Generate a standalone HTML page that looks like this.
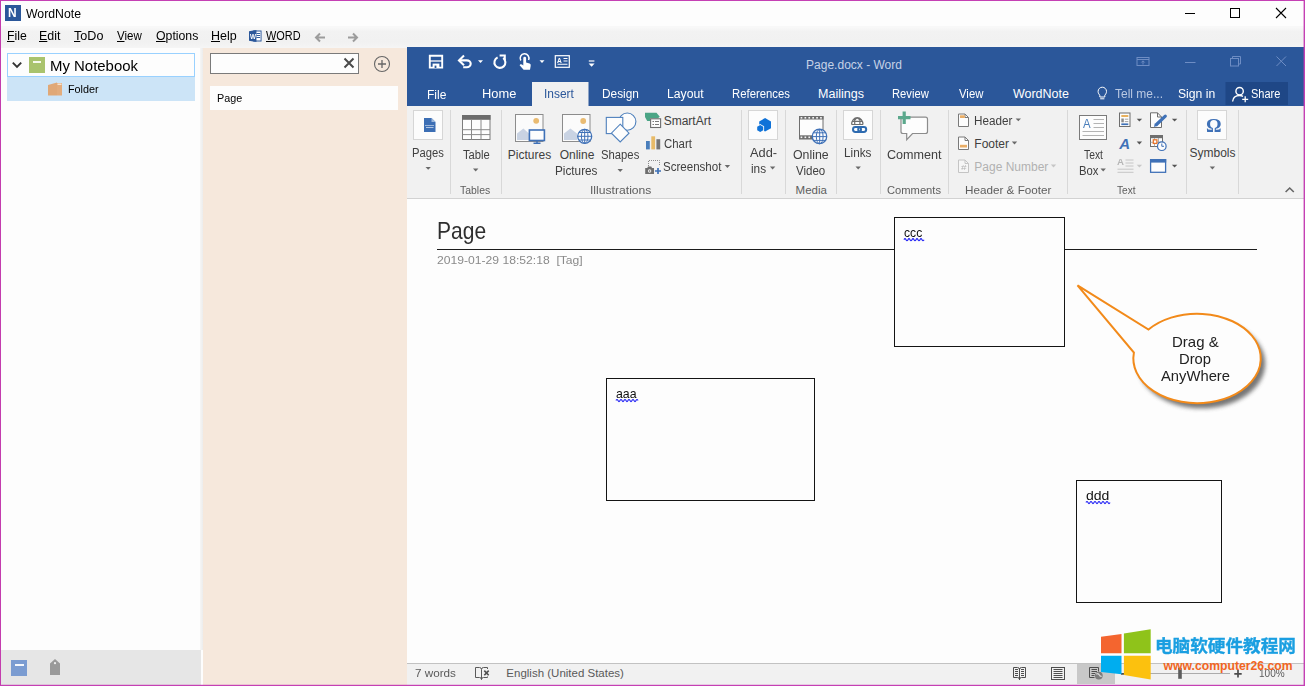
<!DOCTYPE html>
<html>
<head>
<meta charset="utf-8">
<title>WordNote</title>
<style>
html,body{margin:0;padding:0;}
body{width:1305px;height:686px;position:relative;overflow:hidden;background:#fdfdfd;font-family:"Liberation Sans",sans-serif;font-size:12px;color:#000;}
.abs{position:absolute;}
svg{position:absolute;overflow:visible;}
.t{position:absolute;white-space:nowrap;line-height:1;transform-origin:0 50%;}
u{text-decoration:underline;text-underline-offset:1px;}
#titlebar{left:1px;top:1px;width:1303px;height:26px;background:#fdfdfd;border-bottom:1px solid #f8f8f8;box-sizing:border-box;}
#menubar{left:1px;top:27px;width:1303px;height:21px;background:linear-gradient(180deg,#f9f9f9 0,#f2f2f2 22%,#f1f1f1 70%,#f5f5f5 100%);}
#leftpane{left:1px;top:48px;width:202px;height:603px;background:#fdfdfd;}
#leftbar{left:1px;top:650px;width:200px;height:35px;background:#e6e6e6;}
#midpane{left:203px;top:48px;width:204px;height:637px;background:#f6e8dc;}
#wtitle{left:407px;top:47px;width:897px;height:59px;background:#2b579a;}
#ribbon{left:407px;top:106px;width:897px;height:92px;background:#f1f1f1;border-bottom:1px solid #d2d2d2;}
#doc{left:407px;top:199px;width:897px;height:464px;background:#fdfdfd;}
#status{left:407px;top:663px;width:897px;height:22px;background:#f1f1f1;border-top:1px solid #c2c2c2;box-sizing:border-box;}
.sep{position:absolute;top:110px;width:1px;height:84px;background:#d8d8d8;}
.bx{position:absolute;background:#fcfcfc;border:1px solid #d6d6d6;box-sizing:border-box;}

</style>
</head>
<body>
<div class="abs" id="titlebar"></div>
<div class="abs" id="menubar"></div>
<div class="abs" id="leftpane"></div>
<div class="abs" id="leftbar"></div>
<div class="abs" style="left:200px;top:48px;width:3px;height:602px;background:linear-gradient(90deg,#f6f6f6,#ececec);"></div>
<div class="abs" id="midpane"></div>
<div class="abs" id="wtitle"></div>
<div class="abs" id="ribbon"></div>
<div class="abs" id="doc"></div>
<div class="abs" id="status"></div>
<div class="abs" style="left:5px;top:5px;width:16px;height:16px;background:#2b579a;"></div>
<div class="t" style="left:8.20px;top:7.00px;font-size:12.5px;color:#fff;font-weight:bold;transform:scaleX(0.9522);">N</div><div class="t" style="left:26.00px;top:8.00px;font-size:12px;color:#000;transform:scaleX(1.0221);">WordNote</div>
<svg style="left:1180px;top:4px" width="112" height="20" viewBox="0 0 112 20">
<path d="M5 9.5H15" stroke="#000" stroke-width="1" fill="none"/>
<rect x="50.5" y="4.5" width="9" height="9" stroke="#000" stroke-width="1" fill="none"/>
<path d="M96 4L106 14M106 4L96 14" stroke="#000" stroke-width="1.1" fill="none"/>
</svg>
<div class="t" style="left:7.10px;top:30.00px;font-size:12px;color:#000;transform:scaleX(1.0189);"><u>F</u>ile</div><div class="t" style="left:39.10px;top:30.00px;font-size:12px;color:#000;transform:scaleX(1.0373);"><u>E</u>dit</div><div class="t" style="left:73.99px;top:30.00px;font-size:12px;color:#000;transform:scaleX(1.0490);"><u>T</u>oDo</div><div class="t" style="left:117.20px;top:30.00px;font-size:12px;color:#000;transform:scaleX(0.9608);"><u>V</u>iew</div><div class="t" style="left:155.59px;top:30.00px;font-size:12px;color:#000;transform:scaleX(1.0238);"><u>O</u>ptions</div><div class="t" style="left:211.29px;top:30.00px;font-size:12px;color:#000;transform:scaleX(1.0389);"><u>H</u>elp</div><svg style="left:248.800px;top:30px" width="13" height="12" viewBox="0 0 14 12" preserveAspectRatio="none">
<rect x="5" y="1" width="8" height="10" fill="#fff" stroke="#2b579a" stroke-width="1"/>
<path d="M8 3.5H12M8 5.5H12M8 7.5H12" stroke="#2b579a" stroke-width="1"/>
<path d="M0 1.2L8 0V12L0 10.8Z" fill="#2b579a"/>
</svg>
<div class="t" style="left:249.60px;top:33.00px;font-size:7.5px;color:#fff;font-weight:bold;transform:scaleX(0.8458);">W</div><div class="t" style="left:266.10px;top:30.00px;font-size:12px;color:#000;transform:scaleX(0.9105);"><u>W</u>ORD</div>
<svg style="left:314px;top:32px" width="46" height="12" viewBox="0 0 46 12">
<path d="M11 5.5H2.5M6 1.5L2 5.5L6 9.5" stroke="#9c9c9c" stroke-width="2" fill="none"/>
<path d="M34 5.5H42.5M39 1.5L43 5.5L39 9.5" stroke="#9c9c9c" stroke-width="2" fill="none"/>
</svg>
<div class="abs" style="left:7px;top:53px;width:186px;height:22px;border:1px solid #99d1ff;background:#fdfdfd;"></div>
<div class="abs" style="left:7px;top:77px;width:188px;height:24px;background:#cce4f7;"></div>
<svg style="left:11px;top:59px" width="12" height="10" viewBox="0 0 12 10"><path d="M1.800 3.600L6 7.800L10.200 3.600" stroke="#333" stroke-width="1.900" fill="none"/></svg>
<div class="abs" style="left:29px;top:57px;width:16px;height:16px;background:#a9c36d;"></div>
<div class="abs" style="left:33px;top:61px;width:8px;height:2px;background:#f6f9ec;"></div>
<div class="t" style="left:50.05px;top:58.00px;font-size:15.4px;color:#000;transform:scaleX(0.9702);">My Notebook</div>
<svg style="left:48px;top:82px" width="15" height="14" viewBox="0 0 15 14"><path d="M0 3L9 0.5V13.5H0Z" fill="#e0a877"/><path d="M9 1H14V13.500H9Z" fill="#e3ac7c"/><rect x="9.5" y="1.5" width="4" height="1.5" fill="#f7e3d0"/></svg>
<div class="t" style="left:67.53px;top:84.00px;font-size:11.5px;color:#000;transform:scaleX(0.9399);">Folder</div>
<div class="abs" style="left:11px;top:660px;width:16px;height:16px;background:#7b9cd1;"></div>
<div class="abs" style="left:15px;top:664px;width:9px;height:2px;background:#f4f7fc;"></div>
<svg style="left:49px;top:658px" width="12" height="18" viewBox="0 0 12 18"><path d="M1 5.400L6 1L11 5.400V17H1Z" fill="#9a9a9a"/><circle cx="6" cy="5.200" r="1.100" fill="#f0f0f0"/></svg>
<div class="abs" style="left:210px;top:53px;width:147px;height:19px;border:1px solid #7a7a7a;background:#fdfdfd;"></div>
<svg style="left:343px;top:57px" width="12" height="12" viewBox="0 0 12 12"><path d="M1.5 1.5L10.5 10.5M10.5 1.5L1.5 10.5" stroke="#4a4a4a" stroke-width="2" fill="none"/></svg>
<svg style="left:372px;top:54px" width="20" height="20" viewBox="0 0 20 20"><circle cx="10" cy="10" r="7.5" stroke="#666" stroke-width="1.1" fill="none"/><path d="M6 10H14M10 6V14" stroke="#666" stroke-width="1.3"/></svg>
<div class="abs" style="left:210px;top:86px;width:188px;height:24px;background:#fdfdfd;"></div>
<div class="t" style="left:216.53px;top:93.00px;font-size:11.8px;color:#000;transform:scaleX(0.9155);">Page</div><svg style="left:407px;top:47px" width="897" height="59" viewBox="407 47 897 59">
<!-- save -->
<path d="M429.800 55.800H442.200V67.600H429.800Z" fill="none" stroke="#fff" stroke-width="1.900"/>
<path d="M429.7 61H442.3" stroke="#fff" stroke-width="1.3"/>
<rect x="432.6" y="63.6" width="6.8" height="4.4" fill="#fff"/>
<rect x="434.6" y="65.6" width="1.8" height="2.4" fill="#2b579a"/>
<!-- undo -->
<path d="M464 55.6L459 60.4L464 65.200" fill="none" stroke="#fff" stroke-width="2.1"/>
<path d="M459.500 60.4H466.8A3.900 3.4 0 0 1 466.8 67.2H463.2" fill="none" stroke="#fff" stroke-width="2.1"/>
<path d="M478 60.2h5l-2.5 2.8z" fill="#fff"/>
<!-- redo/repeat -->
<path d="M497.6 57.4A5.500 5.5 0 1 0 503.2 58" fill="none" stroke="#fff" stroke-width="2.1"/>
<path d="M499.600 55.4H504.8V60.6" fill="none" stroke="#fff" stroke-width="2"/>
<!-- touch -->
<path d="M520.8 60.5A4.4 4.4 0 1 1 528.6 60" fill="none" stroke="#fff" stroke-width="1.5"/>
<path d="M523.3 58.2a1.4 1.4 0 0 1 2.8 0V62.5L529.6 63.6Q531 64.2 530.7 65.8L530 69.8H523.6L519.6 65.2Q520.3 63.6 522 64.6L523.3 65.6Z" fill="#fff"/>
<path d="M539.5 60.2h5l-2.5 2.8z" fill="#fff"/>
<!-- AE form -->
<rect x="555.3" y="55.7" width="14" height="11.6" fill="none" stroke="#fff" stroke-width="1.2"/>
<path d="M563.5 58.5H567.5M563.5 61H567.5M557.5 64.2H567.5" stroke="#fff" stroke-width="1.1"/>
<!-- customize -->
<path d="M588.8 61H594.4" stroke="#fff" stroke-width="1.2"/><path d="M588.6 63.6h6l-3 3.2z" fill="#fff"/>
<!-- win controls -->
<g stroke="#6e8dc4" fill="none" stroke-width="1" transform="translate(0,-1)">
<rect x="1137" y="58.5" width="12" height="8"/><path d="M1137 60.5H1149M1143 65.5V62M1141.3 63.5L1143 61.8L1144.7 63.5"/>
<path d="M1185 63.5H1195.5"/>
<rect x="1230.5" y="59.5" width="8" height="7.5"/><path d="M1232.5 59.5V57.5H1240.5V65H1238.5"/>
<path d="M1276.5 57.5L1286 67M1286 57.5L1276.5 67"/>
</g>
<!-- insert tab -->
<rect x="532" y="82" width="56.5" height="24" fill="#f1f1f1"/>
<!-- share btn -->
<rect x="1225.5" y="82" width="62.5" height="23" fill="#1f4786"/>
<!-- bulb -->
<path d="M1099.8 95.2C1098.4 93.6 1098.1 92.6 1098.1 91.4A4.2 4.2 0 0 1 1106.5 91.4C1106.500 92.6 1106.2 93.6 1104.8 95.2V97H1099.8Z" fill="none" stroke="#fff" stroke-width="1"/>
<path d="M1100.2 98.8H1104.4" stroke="#fff" stroke-width="1"/>
<!-- person -->
<circle cx="1239.600" cy="91.200" r="3.7" fill="none" stroke="#fff" stroke-width="1.4"/>
<path d="M1232.6 101.5C1233 97.2 1236 95.5 1239.6 95.5C1241 95.5 1242 95.8 1243 96.300" fill="none" stroke="#fff" stroke-width="1.4"/>
<path d="M1242.2 99.3H1248.2M1245.2 96.3V102.3" stroke="#fff" stroke-width="1.3"/>
</svg>
<div class="t" style="left:557.20px;top:58.00px;font-size:6.5px;color:#fff;font-weight:bold;transform:scaleX(1.0206);">A</div><div class="t" style="left:806.10px;top:59.00px;font-size:12px;color:#c6d2e6;">Page.docx - Word</div><div class="t" style="left:426.86px;top:89.00px;font-size:12.5px;color:#fff;transform:scaleX(0.9637);">File</div><div class="t" style="left:482.34px;top:88.00px;font-size:12.5px;color:#fff;transform:scaleX(1.0282);">Home</div><div class="t" style="left:544.04px;top:88.00px;font-size:12.5px;color:#2b579a;transform:scaleX(0.9563);">Insert</div><div class="t" style="left:602.15px;top:88.00px;font-size:12.5px;color:#fff;transform:scaleX(0.9482);">Design</div><div class="t" style="left:667.15px;top:88.00px;font-size:12.5px;color:#fff;transform:scaleX(0.9746);">Layout</div><div class="t" style="left:732.15px;top:88.00px;font-size:12.5px;color:#fff;transform:scaleX(0.9061);">References</div><div class="t" style="left:818.04px;top:88.00px;font-size:12.5px;color:#fff;">Mailings</div><div class="t" style="left:892.10px;top:88.00px;font-size:12.5px;color:#fff;transform:scaleX(0.8976);">Review</div><div class="t" style="left:959.20px;top:88.00px;font-size:12.5px;color:#fff;transform:scaleX(0.9079);">View</div><div class="t" style="left:1012.90px;top:88.00px;font-size:12.5px;color:#fff;">WordNote</div><div class="t" style="left:1115.24px;top:88.00px;font-size:12.5px;color:#b9c8e2;transform:scaleX(0.9592);">Tell me...</div><div class="t" style="left:1178.10px;top:88.00px;font-size:12.5px;color:#fff;transform:scaleX(0.9739);">Sign in</div><div class="t" style="left:1251.10px;top:88.00px;font-size:12.5px;color:#fff;transform:scaleX(0.8802);">Share</div><div class="sep" style="left:450px"></div><div class="sep" style="left:501px"></div><div class="sep" style="left:741px"></div><div class="sep" style="left:785px"></div><div class="sep" style="left:836px"></div><div class="sep" style="left:880px"></div><div class="sep" style="left:948px"></div><div class="sep" style="left:1067px"></div><div class="sep" style="left:1186px"></div><div class="sep" style="left:1238px"></div><div class="bx" style="left:413px;top:110px;width:30px;height:30px"></div><div class="bx" style="left:748px;top:110px;width:30px;height:30px"></div><div class="bx" style="left:843px;top:110px;width:30px;height:30px"></div><div class="bx" style="left:1197px;top:110px;width:30px;height:30px"></div><svg style="left:407px;top:106px" width="897" height="93" viewBox="407 106 897 93">
<!-- pages icon -->
<path d="M424 118H431.5L435.500 122V132H424Z" fill="#3c6eb4"/><path d="M431.5 118V122H435.5Z" fill="#9db8dc"/>
<path d="M425.500 125.5H434" stroke="#fff" stroke-width="1" stroke-dasharray="1 1"/><path d="M426 127.500H433.500" stroke="#cfdcee" stroke-width="0.8"/>
<path d="M425.5 166.9h5.4l-2.7 2.800z" fill="#6a6a6a"/>
<!-- table icon -->
<rect x="462.5" y="115.5" width="27.500" height="24" fill="#fdfdfd" stroke="#7d7d7d" stroke-width="1"/>
<rect x="462" y="115" width="28.5" height="4.800" fill="#6c6c6c"/>
<path d="M471.500 119.500V139.500M481 119.500V139.500M462.500 12500H490M462.500 129.700H490M462.500 134.600H490" stroke="#8a8a8a" stroke-width="1"/>
<path d="M473 168.6h5.4l-2.7 2.800z" fill="#6a6a6a"/>
<!-- pictures icon -->
<rect x="515.5" y="114.500" width="27.500" height="27" fill="#fbfbfb" stroke="#8c8c8c" stroke-width="1"/>
<circle cx="536.2" cy="120.800" r="2.9" fill="#e9bb72"/>
<path d="M517 140V133.500L523.400 128.500L529 133.500V140Z" fill="#c9d3e3"/>
<rect x="529.400" y="130" width="15" height="10.500" fill="#fdfdfd" stroke="#3f71b7" stroke-width="1.600"/>
<path d="M537 141V143M533.500 143.300H540.500" stroke="#3f71b7" stroke-width="1.500"/>
<!-- online pictures icon -->
<rect x="562.5" y="114.500" width="27.500" height="27" fill="#fbfbfb" stroke="#8c8c8c" stroke-width="1"/>
<circle cx="583.2" cy="121" r="2.9" fill="#e9bb72"/>
<path d="M564 140V133.500L570.400 128.500L577 133.500V140Z" fill="#c9d3e3"/>
<circle cx="584.7" cy="136.300" r="7" fill="#fdfdfd" stroke="#3f71b7" stroke-width="1.300"/>
<path d="M577.700 136.300H591.700M579 132.500H590.400M579 140H590.400M584.700 129.300V143.300" stroke="#3f71b7" stroke-width="1"/>
<ellipse cx="584.7" cy="136.300" rx="3.300" ry="7" fill="none" stroke="#3f71b7" stroke-width="1"/>
<!-- shapes icon -->
<circle cx="627.300" cy="121.600" r="8.600" fill="#fdfdfd" stroke="#4f81bd" stroke-width="1.100"/>
<rect x="606.300" y="117.400" width="16.500" height="16.200" fill="#fdfdfd" stroke="#4f81bd" stroke-width="1.100"/>
<path d="M620.200 124.200L629 133.200L620.200 142L611.400 133.200Z" fill="#fdfdfd" stroke="#4f81bd" stroke-width="1.100"/>
<path d="M617.5 169.1h5.4l-2.7 2.800z" fill="#6a6a6a"/>
<!-- smartart icon -->
<path d="M645 112.700H656.500L659.800 116.700L658 118.300H650.100V121H647.200L645 117Z" fill="#4ba586"/>
<rect x="650.600" y="118.800" width="10" height="8.700" fill="#fdfdfd" stroke="#6e6e6e" stroke-width="1.100"/>
<path d="M652.500 121.500H654M655 121.500H659M652.500 124.500H654M655 124.500H659" stroke="#7a7a7a" stroke-width="1"/>
<!-- chart icon -->
<rect x="646" y="141" width="3.800" height="8.400" fill="#4a7ebb"/><rect x="651.300" y="136.300" width="3.800" height="13.100" fill="#e8bb68"/><rect x="656.400" y="139.200" width="3.800" height="10.200" fill="#767676"/>
<!-- screenshot icon -->
<path d="M648.500 166V160.500H659.500V166" fill="none" stroke="#8a8a8a" stroke-width="1" stroke-dasharray="1 1"/>
<path d="M645.200 168H647.300L648 166.600H651.300L652 168H654V174H645.200Z" fill="#6e6e6e"/><circle cx="649.600" cy="171" r="1.700" fill="#f1f1f1"/><circle cx="649.600" cy="171" r="0.800" fill="#6e6e6e"/>
<path d="M655 171H661M658 168V174" stroke="#3f71b7" stroke-width="1.700"/>
<path d="M724.7 165.1h5.4l-2.7 2.800z" fill="#6a6a6a"/>
</svg>
<div class="t" style="left:412.34px;top:147.00px;font-size:12px;color:#404040;transform:scaleX(0.9364);">Pages</div><div class="t" style="left:463.40px;top:149.00px;font-size:12px;color:#404040;transform:scaleX(0.9342);">Table</div><div class="t" style="left:460.40px;top:185.00px;font-size:11.5px;color:#5e5e5e;transform:scaleX(0.9083);">Tables</div><div class="t" style="left:507.86px;top:149.00px;font-size:12px;color:#404040;">Pictures</div><div class="t" style="left:559.70px;top:149.00px;font-size:12px;color:#404040;">Online</div><div class="t" style="left:554.53px;top:165.00px;font-size:12px;color:#404040;transform:scaleX(0.9794);">Pictures</div><div class="t" style="left:601.04px;top:149.00px;font-size:12px;color:#404040;transform:scaleX(0.9409);">Shapes</div><div class="t" style="left:663.67px;top:115.00px;font-size:12px;color:#404040;">SmartArt</div><div class="t" style="left:664.13px;top:138.00px;font-size:12px;color:#404040;transform:scaleX(0.9508);">Chart</div><div class="t" style="left:663.04px;top:161.00px;font-size:12px;color:#404040;transform:scaleX(0.9625);">Screenshot</div><div class="t" style="left:590.15px;top:185.00px;font-size:11.5px;color:#5e5e5e;transform:scaleX(1.0561);">Illustrations</div><svg style="left:407px;top:106px" width="897" height="93" viewBox="407 106 897 93">
<!-- add-ins -->
<path d="M765.1 118.0L771.0 121.4L771.0 128.2L765.1 131.6L759.2 128.2L759.2 121.4Z" fill="#0f72d8"/><path d="M760.2 123.9L764.1 126.2L764.1 130.7L760.2 132.9L756.3 130.7L756.3 126.2Z" fill="#fbfbfb"/><path d="M760.2 124.9L763.2 126.7L763.2 130.2L760.2 131.9L757.2 130.2L757.2 126.7Z" fill="#0f72d8"/>
<path d="M769.9 166.6h5.4l-2.7 2.800z" fill="#6a6a6a"/>
<!-- online video -->
<rect x="799.500" y="116.500" width="23.500" height="22.300" fill="#fdfdfd" stroke="#6e6e6e" stroke-width="1"/>
<rect x="799" y="116" width="24.500" height="3.500" fill="#6e6e6e"/><rect x="799" y="135.300" width="24.500" height="4" fill="#6e6e6e"/><rect x="800.6" y="117" width="1.700" height="1.600" fill="#f4f4f4"/><rect x="800.6" y="136.500" width="1.700" height="1.600" fill="#f4f4f4"/><rect x="804.5" y="117" width="1.700" height="1.600" fill="#f4f4f4"/><rect x="804.5" y="136.500" width="1.700" height="1.600" fill="#f4f4f4"/><rect x="808.4" y="117" width="1.700" height="1.600" fill="#f4f4f4"/><rect x="808.4" y="136.500" width="1.700" height="1.600" fill="#f4f4f4"/><rect x="812.3" y="117" width="1.700" height="1.600" fill="#f4f4f4"/><rect x="812.3" y="136.500" width="1.700" height="1.600" fill="#f4f4f4"/><rect x="816.2" y="117" width="1.700" height="1.600" fill="#f4f4f4"/><rect x="816.2" y="136.500" width="1.700" height="1.600" fill="#f4f4f4"/><rect x="820.1" y="117" width="1.700" height="1.600" fill="#f4f4f4"/><rect x="820.1" y="136.500" width="1.700" height="1.600" fill="#f4f4f4"/>
<circle cx="819.500" cy="136.400" r="7.200" fill="#fdfdfd" stroke="#3f71b7" stroke-width="1.300"/>
<path d="M812.500 136.600H826.900M813.800 132.800H825.600M813.800 140.400H825.600M819.700 129.400V143.800" stroke="#3f71b7" stroke-width="1"/>
<ellipse cx="819.700" cy="136.600" rx="3.400" ry="7.200" fill="none" stroke="#3f71b7" stroke-width="1"/>
<!-- links -->
<path d="M851.600 124.500A5.700 6.900 0 0 1 863 124.500M851.600 124.500H863M852.300 121.400H862.300M854.700 119.300V124.500M859.900 119.300V124.500M855.200 119.600Q857.300 116.900 859.400 119.600" fill="none" stroke="#6e6e6e" stroke-width="1.200"/>
<rect x="853" y="127.100" width="8" height="4.800" rx="2.400" fill="none" stroke="#2e6bb0" stroke-width="2"/>
<rect x="858.200" y="127.100" width="8" height="4.800" rx="2.400" fill="none" stroke="#2e6bb0" stroke-width="2"/>
<path d="M855.5 166.6h5.4l-2.7 2.800z" fill="#6a6a6a"/>
<!-- comment -->
<path d="M903 117.200H925.500Q927.500 117.200 927.500 119.200V131.500Q927.500 133.500 925.500 133.500H912.500L906.700 139.700V133.500H903Q901 133.500 901 131.500V119.200Q901 117.200 903 117.200Z" fill="#fdfdfd" stroke="#8c8c8c" stroke-width="1.200"/>
<path d="M898 117.700H910.500M904.200 111.500V124" stroke="#5ba88c" stroke-width="3.200"/>
<!-- header/footer/pagenumber -->
<path d="M958.5 114H965L968.5 117.5V126.5H958.5Z" fill="#fdfdfd" stroke="#7a7a7a" stroke-width="1"/><path d="M965 114V117.5H968.5" fill="none" stroke="#7a7a7a" stroke-width="1"/><rect x="960" y="115.300" width="4.800" height="2.700" fill="#e9ad66"/>
<path d="M958.5 137H965L968.5 140.5V149.5H958.5Z" fill="#fdfdfd" stroke="#7a7a7a" stroke-width="1"/><path d="M965 137V140.5H968.5" fill="none" stroke="#7a7a7a" stroke-width="1"/><rect x="960" y="144.800" width="7" height="2.700" fill="#e9ad66"/>
<path d="M958.5 160H965L968.5 163.5V172.5H958.5Z" fill="#f6f6f6" stroke="#c4c4c4" stroke-width="1"/><path d="M965 160V163.5H968.5" fill="none" stroke="#c4c4c4" stroke-width="1"/>
<path d="M1015.6 118.4h5.4l-2.7 2.800z" fill="#6a6a6a"/><path d="M1011.8 141.6h5.4l-2.7 2.800z" fill="#6a6a6a"/><path d="M1050.8 164.6h5.4l-2.7 2.800z" fill="#c6c6c6"/>
<!-- text box -->
<rect x="1079.500" y="115.500" width="27" height="24" fill="#fdfdfd" stroke="#7a7a7a" stroke-width="1"/>
<path d="M1093.500 119.500H1104M1093.500 123.500H1104M1093.500 127.500H1104M1082.500 131.500H1104M1082.500 135.500H1104" stroke="#b4b4b4" stroke-width="1"/>
<path d="M1100.5 168.6h5.4l-2.7 2.800z" fill="#6a6a6a"/>
</svg>
<div class="t" style="left:750.22px;top:147.00px;font-size:12px;color:#404040;transform:scaleX(1.0675);">Add-</div><div class="t" style="left:751.47px;top:163.00px;font-size:12px;color:#404040;transform:scaleX(0.9840);">ins</div><div class="t" style="left:792.93px;top:149.00px;font-size:12px;color:#404040;transform:scaleX(1.0281);">Online</div><div class="t" style="left:796.40px;top:165.00px;font-size:12px;color:#404040;transform:scaleX(0.9611);">Video</div><div class="t" style="left:795.60px;top:185.00px;font-size:11.5px;color:#5e5e5e;">Media</div><div class="t" style="left:844.15px;top:147.00px;font-size:12px;color:#404040;transform:scaleX(0.9785);">Links</div><div class="t" style="left:886.70px;top:149.00px;font-size:12px;color:#404040;transform:scaleX(1.0502);">Comment</div><div class="t" style="left:886.78px;top:185.00px;font-size:11.5px;color:#5e5e5e;transform:scaleX(0.9713);">Comments</div><div class="t" style="left:974.34px;top:115.00px;font-size:12px;color:#404040;transform:scaleX(0.9766);">Header</div><div class="t" style="left:974.34px;top:138.00px;font-size:12px;color:#404040;">Footer</div><div class="t" style="left:974.34px;top:161.00px;font-size:12px;color:#b2b2b2;">Page Number</div><div class="t" style="left:961.00px;top:164.00px;font-size:8px;color:#b4b4b4;transform:scaleX(1.2351);">#</div><div class="t" style="left:964.91px;top:185.00px;font-size:11.5px;color:#5e5e5e;transform:scaleX(1.0164);">Header &amp; Footer</div><div class="t" style="left:1083.20px;top:118.00px;font-size:12px;color:#4a7ebb;transform:scaleX(0.9481);">A</div><div class="t" style="left:1083.90px;top:149.00px;font-size:12px;color:#404040;transform:scaleX(0.8585);">Text</div><div class="t" style="left:1078.53px;top:165.00px;font-size:12px;color:#404040;transform:scaleX(0.9401);">Box</div><svg style="left:407px;top:106px" width="897" height="93" viewBox="407 106 897 93">
<!-- quick parts -->
<rect x="1119.500" y="113" width="10.500" height="13.500" fill="#fdfdfd" stroke="#6e6e6e" stroke-width="1"/>
<rect x="1121.300" y="115" width="7" height="2" fill="#e9b15e"/><rect x="1121.300" y="118.500" width="2.500" height="3.800" fill="#8a8a8a"/>
<path d="M1124.800 119.200H1128.300M1124.800 121.600H1128.300" stroke="#9a9a9a" stroke-width="0.900"/><rect x="1121.300" y="123.400" width="7" height="1.700" fill="#3f71b7"/>
<path d="M1136.7 118.8h5.4l-2.7 2.800z" fill="#555"/>
<!-- wordart A -->
<path d="M1136.7 141.6h5.4l-2.7 2.800z" fill="#555"/>
<!-- drop cap (disabled) -->
<path d="M1125.500 160H1133.500M1125.500 163H1133.500M1125.500 166H1133.500M1117.500 169.200H1133.500M1117.500 172.300H1133.500" stroke="#c6c6c6" stroke-width="1"/>
<path d="M1136.7 164.8h5.4l-2.7 2.800z" fill="#c8c8c8"/>
<!-- signature line -->
<path d="M1150.500 112.800H1157.500L1161.500 117V127.500H1150.500Z" fill="#fdfdfd" stroke="#6e6e6e" stroke-width="1"/><path d="M1157.500 112.800V117H1161.500" fill="none" stroke="#6e6e6e" stroke-width="1"/>
<path d="M1165.300 116.200L1156.500 124.500" stroke="#3f71b7" stroke-width="3.200" stroke-linecap="round"/><path d="M1154 127L1154.800 123.300L1157.500 125.800Z" fill="#3f71b7"/>
<path d="M1171.9 118.8h5.4l-2.7 2.800z" fill="#555"/>
<!-- date & time -->
<rect x="1150.500" y="135.500" width="12" height="11" fill="#fdfdfd" stroke="#6e6e6e" stroke-width="1"/><rect x="1150" y="135" width="13" height="3.200" fill="#6e6e6e"/>
<path d="M1154.500 138V146.500M1158.500 138V146.500M1150.500 142.300H1162.500" stroke="#9a9a9a" stroke-width="0.800"/>
<rect x="1153.300" y="139.800" width="3.600" height="3.600" fill="#fdfdfd" stroke="#e8762c" stroke-width="1.300"/>
<circle cx="1161.800" cy="146.200" r="4.300" fill="#fdfdfd" stroke="#3f71b7" stroke-width="1.200"/><path d="M1161.800 143.500V146.300H1164" fill="none" stroke="#3f71b7" stroke-width="1"/>
<!-- object -->
<rect x="1150.600" y="159.700" width="15" height="12.600" fill="#fdfdfd" stroke="#3f71b7" stroke-width="1.300"/><rect x="1150" y="159" width="16.200" height="3.600" fill="#3f71b7"/>
<path d="M1171.9 164.8h5.4l-2.7 2.800z" fill="#555"/><path d="M1209.7 166.6h5.4l-2.7 2.800z" fill="#6a6a6a"/>
<!-- collapse chevron -->
<path d="M1285.600 192L1289.700 188L1293.800 192" fill="none" stroke="#666" stroke-width="1.600"/>
</svg>
<div class="t" style="left:1117.20px;top:157.00px;font-size:9.5px;color:#b6b6b6;font-weight:bold;transform:scaleX(1.0182);">A</div><div class="t" style="left:1119.20px;top:136.00px;font-size:15px;color:#3f71b7;font-weight:bold;font-style:italic;">A</div><div class="t" style="left:1117.20px;top:185.00px;font-size:11.5px;color:#5e5e5e;transform:scaleX(0.8770);">Text</div><div class="t" style="left:1205.80px;top:117.00px;font-size:18px;color:#3f71b7;font-family:'Liberation Serif','DejaVu Serif',serif;font-weight:bold;transform:scaleX(1.0817);">&#937;</div><div class="t" style="left:1189.48px;top:147.00px;font-size:12px;color:#404040;">Symbols</div><div class="abs" style="left:437px;top:249px;width:820px;height:1px;background:#1c1c1c;"></div>
<div class="abs" style="left:606px;top:378px;width:207px;height:121px;border:1px solid #141414;background:#fdfdfd;"></div>
<div class="abs" style="left:894px;top:217px;width:169px;height:128px;border:1px solid #141414;background:#fdfdfd;"></div>
<div class="abs" style="left:1076px;top:480px;width:144px;height:121px;border:1px solid #141414;background:#fdfdfd;"></div>
<svg style="left:407px;top:199px" width="897" height="464" viewBox="407 199 897 464">
<defs><filter id="sh" x="-20%" y="-20%" width="150%" height="150%"><feGaussianBlur stdDeviation="2.200"/></filter></defs>
<path d="M616 400.6q1 -2.2 2 0q1 2.2 2 0q1 -2.2 2 0q1 2.2 2 0q1 -2.2 2 0q1 2.2 2 0q1 -2.2 2 0q1 2.2 2 0q1 -2.2 2 0q1 2.2 2 0q1 -2.2 2 0" fill="none" stroke="#2a2af5" stroke-width="1.150"/><path d="M904 239.7q1 -2.2 2 0q1 2.2 2 0q1 -2.2 2 0q1 2.2 2 0q1 -2.2 2 0q1 2.2 2 0q1 -2.2 2 0q1 2.2 2 0q1 -2.2 2 0q1 2.2 2 0" fill="none" stroke="#2a2af5" stroke-width="1.150"/><path d="M1086 502.6q1 -2.2 2 0q1 2.2 2 0q1 -2.2 2 0q1 2.2 2 0q1 -2.2 2 0q1 2.2 2 0q1 -2.2 2 0q1 2.2 2 0q1 -2.2 2 0q1 2.2 2 0q1 -2.2 2 0q1 2.2 2 0" fill="none" stroke="#2a2af5" stroke-width="1.150"/>
<g transform="translate(4.500,4.500)" filter="url(#sh)" opacity="0.800"><ellipse cx="1197" cy="359.100" rx="63.700" ry="44.700" fill="#555"/></g>
<path d="M1077.500 285.300L1148.500 329.500A63.700 44.700 0 1 1 1133.900 352.600Z" fill="#fdfdfd" stroke="#f28a1a" stroke-width="2" stroke-linejoin="miter"/>
</svg>
<div class="t" style="left:437.20px;top:220.00px;font-size:23.2px;color:#2e2e2e;transform:scaleX(0.9066);">Page</div><div class="t" style="left:436.93px;top:255.00px;font-size:11px;color:#8a8a8a;transform:scaleX(1.1031);">2019-01-29 18:52:18&nbsp; [Tag]</div><div class="t" style="left:616.40px;top:387.00px;font-size:13.2px;color:#111;transform:scaleX(0.9357);">aaa</div><div class="t" style="left:903.61px;top:226.00px;font-size:13.2px;color:#111;transform:scaleX(0.9201);">ccc</div><div class="t" style="left:1085.77px;top:489.00px;font-size:13.5px;color:#111;transform:scaleX(1.0399);">ddd</div><div class="t" style="left:1171.73px;top:335.00px;font-size:14.3px;color:#222;transform:scaleX(1.0490);">Drag &amp;</div><div class="t" style="left:1178.87px;top:352.00px;font-size:14.3px;color:#222;transform:scaleX(1.0334);">Drop</div><div class="t" style="left:1161.03px;top:369.00px;font-size:14.3px;color:#222;transform:scaleX(1.0340);">AnyWhere</div><div class="abs" style="left:1077px;top:664px;width:38px;height:20px;background:#c8c8c8;"></div>
<svg style="left:407px;top:663px" width="897" height="22" viewBox="407 663 897 22">
<!-- proofing -->
<path d="M475.500 667.500H479.500Q481.500 667.500 481.500 669.500V679.500M481.500 669.500Q481.500 667.500 483.500 667.500H487.500V669M475.500 667.500V677.500H479.500Q481.500 677.500 481.500 679.500Q481.500 677.500 483.500 677.500H487.500V676.500" fill="none" stroke="#5a5a5a" stroke-width="1"/>
<path d="M484.300 670.600L488.700 675.200M488.700 670.600L484.300 675.200" stroke="#505050" stroke-width="1.600"/>
<!-- read mode -->
<path d="M1019.500 668.500V680M1013.500 667.500H1017.500Q1019.500 667.500 1019.500 669.500Q1019.500 667.500 1021.500 667.500H1025.500V677.500H1021.500Q1019.500 677.500 1019.500 679.500Q1019.500 677.500 1017.500 677.500H1013.500Z" fill="none" stroke="#4e4e4e" stroke-width="1"/>
<path d="M1015 669.500H1018M1015 671.500H1018M1015 673.500H1018M1015 675.500H1018M1021 669.500H1024M1021 671.500H1024M1021 673.500H1024M1021 675.500H1024" stroke="#4e4e4e" stroke-width="1"/>
<!-- print layout -->
<rect x="1051.500" y="667.500" width="13" height="12" fill="none" stroke="#4e4e4e" stroke-width="1"/>
<path d="M1053.500 669.500H1062.500M1053.500 671.500H1062.500M1053.500 673.500H1062.500M1053.500 675.500H1062.500M1053.500 677.500H1062.500" stroke="#4e4e4e" stroke-width="1"/>
<!-- web layout -->
<path d="M1098.500 671.500V667.500H1089.500V677.500H1094.500" fill="none" stroke="#4e4e4e" stroke-width="1"/>
<path d="M1091.500 669.500H1097M1091.500 671.500H1097M1091.500 673.500H1095M1091.500 675.500H1094.500" stroke="#4e4e4e" stroke-width="1"/>
<circle cx="1098.800" cy="675.600" r="3.900" fill="#7c7c7c"/><path d="M1096.300 674.200Q1098 673 1099.200 674.800Q1100.200 676.800 1101.600 676.200" fill="none" stroke="#d4d4d4" stroke-width="1.300"/>
<!-- zoom slider -->
<path d="M1131 673.500H1230" stroke="#ababab" stroke-width="1"/><path d="M1121 673.800H1127.500M1234.300 673.800H1241.700M1238 670.100V677.500" stroke="#4c4c4c" stroke-width="1.700"/>
<rect x="1178.200" y="667.800" width="3.600" height="11" fill="#5c5c5c"/>
</svg>
<div class="t" style="left:414.67px;top:668.00px;font-size:11.5px;color:#5a5a5a;transform:scaleX(1.0165);">7 words</div><div class="t" style="left:506.34px;top:668.00px;font-size:11.5px;color:#5a5a5a;">English (United States)</div><div class="t" style="left:1258.90px;top:668.00px;font-size:11.5px;color:#5a5a5a;transform:scaleX(0.8735);">100%</div><svg style="left:1095px;top:625px" width="60" height="60" viewBox="1095 625 60 60">
<path d="M1101 636.800L1121.500 634V653.200H1101Z" fill="#f4652f"/>
<path d="M1123.900 633.600L1150.700 629.300V653.200H1123.900Z" fill="#8fc31a"/>
<path d="M1101 655.800H1121.500V674.200L1101 671.900Z" fill="#00adef"/>
<path d="M1123.900 655.800H1150.700V679.600L1123.900 675Z" fill="#fcc10e"/>
</svg>
<div class="t" style="left:1154.80px;top:638.00px;font-size:17.3px;color:#1a9fe1;font-family:'Liberation Sans','Noto Sans CJK SC',sans-serif;font-weight:bold;-webkit-text-stroke:0.350px #1a9fe1;transform:scaleX(1.0198);">电脑软硬件教程网</div><div class="t" style="left:1163.60px;top:660.00px;font-size:12.2px;color:#f26522;font-weight:bold;">www.computer26.com</div><div class="abs" style="left:0;top:0;width:1305px;height:1px;background:#c540b4;"></div>
<div class="abs" style="left:0;top:0;width:1px;height:686px;background:#c33cae;"></div>
<div class="abs" style="left:1303px;top:0;width:1px;height:686px;background:rgba(196,62,178,0.400);"></div>
<div class="abs" style="left:1304px;top:0;width:1px;height:686px;background:#c540b4;"></div>
<div class="abs" style="left:0;top:684px;width:1305px;height:1px;background:rgba(196,62,178,0.220);"></div>
<div class="abs" style="left:0;top:685px;width:1305px;height:1px;background:#c540b4;"></div>

</body>
</html>
